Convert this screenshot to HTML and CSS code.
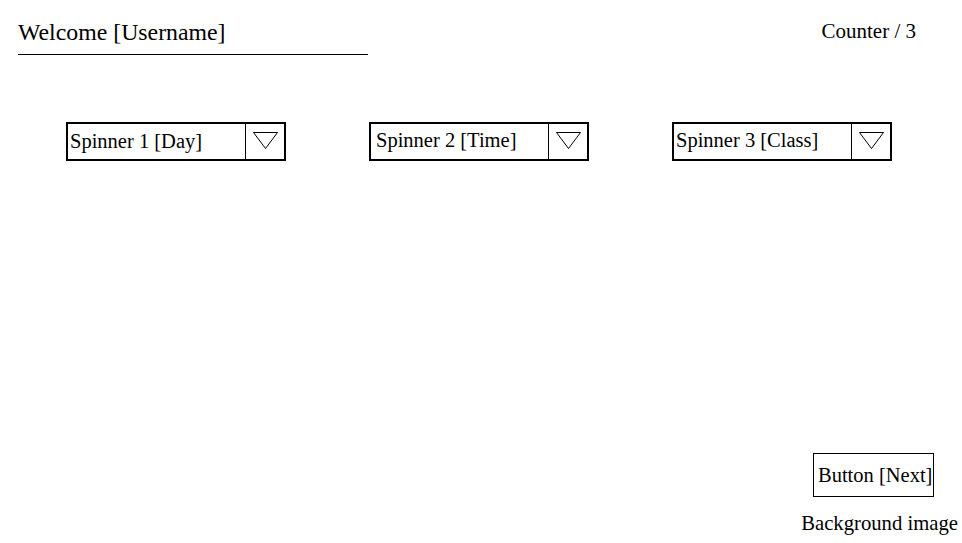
FILE: index.html
```html
<!DOCTYPE html>
<html lang="en">
<head>
<meta charset="utf-8">
<title>Welcome</title>
<link rel="stylesheet" href="styles.css">
</head>
<body>
<div class="screen">
  <header class="top">
    <div class="welcome">Welcome [Username]</div>
    <div class="counter">Counter / 3</div>
  </header>
  <section class="spinners">
    <div class="spinner spinner-day">
      <span class="spinner-label">Spinner 1 [Day]</span>
      <span class="spinner-arrow"><svg width="38" height="35" viewBox="0 0 38 35"><polygon points="7.5,8.5 31.5,8.5 19.5,24.5" fill="none" stroke="#000" stroke-width="1"/></svg></span>
    </div>
    <div class="spinner spinner-time">
      <span class="spinner-label">Spinner 2 [Time]</span>
      <span class="spinner-arrow"><svg width="38" height="35" viewBox="0 0 38 35"><polygon points="7.5,8.5 31.5,8.5 19.5,24.5" fill="none" stroke="#000" stroke-width="1"/></svg></span>
    </div>
    <div class="spinner spinner-class">
      <span class="spinner-label">Spinner 3 [Class]</span>
      <span class="spinner-arrow"><svg width="38" height="35" viewBox="0 0 38 35"><polygon points="7.5,8.5 31.5,8.5 19.5,24.5" fill="none" stroke="#000" stroke-width="1"/></svg></span>
    </div>
  </section>
  <footer class="actions">
    <button class="next-btn" type="button">Button [Next]</button>
    <div class="bg-label">Background image</div>
  </footer>
</div>
</body>
</html>
```
FILE: styles.css
```css
html, body {
  margin: 0;
  padding: 0;
  background: #fff;
}

.screen {
  height: 543px;
  display: flex;
  flex-direction: column;
  font-family: "Liberation Serif", "Times New Roman", serif;
  color: #000;
  box-sizing: border-box;
}

.top {
  display: flex;
  justify-content: space-between;
  align-items: flex-start;
  padding: 18px 46px 0 18px;
}

.welcome {
  width: 350px;
  font-size: 23.8px;
  line-height: 28px;
  padding-bottom: 8px;
  border-bottom: 1px solid #000;
}

.counter {
  font-size: 21px;
  line-height: 24px;
  padding-top: 1px;
}

.spinners {
  display: flex;
  gap: 83px;
  padding-left: 66px;
  margin-top: 67px;
}

.spinner {
  width: 220px;
  height: 39px;
  box-sizing: border-box;
  border: 2px solid #000;
  display: flex;
  align-items: stretch;
}

.spinner-label {
  flex: 1;
  font-size: 20.5px;
  line-height: 35px;
  padding-left: 2px;
  white-space: nowrap;
}

.spinner-time .spinner-label {
  padding-left: 5px;
  line-height: 32px;
}

.spinner-class .spinner-label {
  line-height: 33px;
}

.spinner-arrow {
  width: 38px;
  border-left: 1px solid #000;
  display: flex;
}

.spinner-arrow svg {
  display: block;
}

.actions {
  margin-top: auto;
  display: flex;
  flex-direction: column;
  align-items: flex-end;
  padding: 0 4px 8px 0;
}

.next-btn {
  margin-right: 24px;
  width: 121px;
  height: 44px;
  box-sizing: border-box;
  border: 1px solid #000;
  background: #fff;
  font-family: inherit;
  font-size: 20.5px;
  color: #000;
  padding: 0 0 0 4px;
  text-align: left;
  white-space: nowrap;
}

.bg-label {
  margin-top: 15px;
  font-size: 20.7px;
  line-height: 23px;
}
```
